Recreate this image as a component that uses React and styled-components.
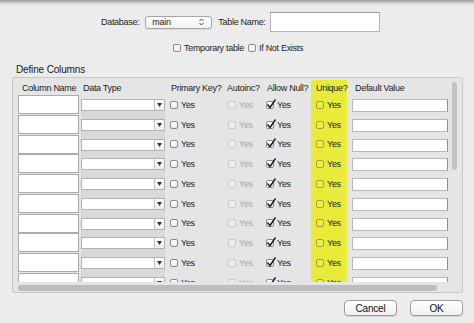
import React from "react";
import styled, { createGlobalStyle } from "styled-components";

const rows = Array.from({ length: 10 }, (_, i) => i);

const GlobalStyle = createGlobalStyle`
  html, body {
    margin: 0;
    padding: 0;
    background: #ececec;
  }
  body {
    font-family: "Liberation Sans", Arial, sans-serif;
    font-size: 9px;
    letter-spacing: -0.3px;
    color: #1c1c1c;
  }
`;

const Check = ({ checked, tone }) => (
  <CheckBox tone={tone}>
    {checked && (
      <svg width="11" height="11" viewBox="0 0 11 11">
        <path d="M1.5 5.5 L4 8.5 L9.5 0.5" fill="none" stroke="#1a1a1a" strokeWidth="1.4" />
      </svg>
    )}
  </CheckBox>
);

const App = () => {
  return (
    <>
      <GlobalStyle />
      <Window>
        <TopRow>
          <Label>Database:</Label>
          <PopUp>
            <span>main</span>
            <svg width="5" height="8" viewBox="0 0 5 8">
              <path d="M0.5 3 L2.5 1 L4.5 3 M0.5 5 L2.5 7 L4.5 5" fill="none" stroke="#333" strokeWidth="0.9" />
            </svg>
          </PopUp>
          <Label>Table Name:</Label>
          <TextField />
        </TopRow>

        <OptionsRow>
          <Option>
            <Check />
            Temporary table
          </Option>
          <Option>
            <Check />
            If Not Exists
          </Option>
        </OptionsRow>

        <Title>Define Columns</Title>

        <Panel>
          <TableClip>
            <Table>
              <Head pad={4}>Column Name</Head>
              <Head pad={3}>Data Type</Head>
              <Head pad={4}>Primary Key?</Head>
              <Head pad={2}>Autoinc?</Head>
              <Head pad={3}>Allow Null?</Head>
              <Head pad={5} highlight>Unique?</Head>
              <Head pad={8}>Default Value</Head>

              {rows.map((r) => (
                <React.Fragment key={r}>
                  <NameCell>
                    <NameField />
                  </NameCell>
                  <TypeCell>
                    <Combo>
                      <ComboArrow>
                        <svg width="5" height="4" viewBox="0 0 5 4">
                          <path d="M0 0 L5 0 L2.5 4 Z" fill="#333" />
                        </svg>
                      </ComboArrow>
                    </Combo>
                  </TypeCell>
                  <CheckCell pad={3}>
                    <Check />
                    <Yes>Yes</Yes>
                  </CheckCell>
                  <CheckCell pad={3}>
                    <Check tone="disabled" />
                    <Yes disabled>Yes</Yes>
                  </CheckCell>
                  <CheckCell pad={2}>
                    <Check checked />
                    <Yes>Yes</Yes>
                  </CheckCell>
                  <CheckCell pad={5} highlight>
                    <Check tone="yellow" />
                    <Yes>Yes</Yes>
                  </CheckCell>
                  <DefaultCell>
                    <DefaultField />
                  </DefaultCell>
                </React.Fragment>
              ))}
            </Table>
          </TableClip>
          <HScroll />
          <VScroll />
        </Panel>

        <Footer>
          <Button>Cancel</Button>
          <Button>OK</Button>
        </Footer>
      </Window>
    </>
  );
};

export default App;

const Window = styled.div`
  width: 474px;
  height: 323px;
  overflow: hidden;
  display: flex;
  flex-direction: column;
  background: linear-gradient(to bottom, #9c9c9c 0px, #cfcfcf 3px, #e6e6e6 5px, #ececec 7px);
`;

const TopRow = styled.div`
  display: flex;
  align-items: center;
  height: 20px;
  margin-top: 12px;
  padding-left: 101px;
`;

const Label = styled.span`
  margin-right: 6px;
  white-space: nowrap;
`;

const PopUp = styled.div`
  box-sizing: border-box;
  width: 67px;
  height: 13px;
  margin-right: 6px;
  padding: 0 7px 0 6px;
  display: flex;
  align-items: center;
  justify-content: space-between;
  border: 1px solid #a6a6a6;
  border-radius: 3px;
  background: linear-gradient(to bottom, #ffffff, #f1f1f1);
  box-shadow: 0 1px 0 rgba(0, 0, 0, 0.08);
`;

const TextField = styled.div`
  box-sizing: border-box;
  width: 110px;
  height: 20px;
  margin-left: -2px;
  border: 1px solid #b5b5b5;
  border-top-color: #9d9d9d;
  background: #fff;
`;

const OptionsRow = styled.div`
  display: flex;
  align-items: center;
  gap: 4px;
  height: 12px;
  margin-top: 10px;
  padding-left: 173px;
`;

const Option = styled.label`
  display: flex;
  align-items: center;
  gap: 3px;
  white-space: nowrap;
`;

const CheckBox = styled.span`
  position: relative;
  box-sizing: border-box;
  width: 8px;
  height: 8px;
  flex: none;
  border-radius: 2px;
  border: 1px solid
    ${(p) => (p.tone === "disabled" ? "#c9c9c9" : p.tone === "yellow" ? "#a8a232" : "#8a8a8a")};
  background: ${(p) =>
    p.tone === "disabled"
      ? "#eeeeee"
      : p.tone === "yellow"
      ? "#eeee4a"
      : "linear-gradient(to bottom, #ffffff, #ececec)"};

  svg {
    position: absolute;
    left: -1px;
    top: -3px;
  }
`;

const Title = styled.div`
  height: 12px;
  line-height: 12px;
  margin-top: 10px;
  padding-left: 16px;
  font-size: 10px;
  letter-spacing: -0.15px;
  color: #1a1a1a;
`;

const Panel = styled.div`
  position: relative;
  box-sizing: border-box;
  width: 451px;
  height: 216px;
  margin: 1px 0 0 12px;
  padding: 2px 0 0 5px;
  border: 1px solid #c7c7c7;
  border-radius: 2px;
  background: #e5e5e5;
`;

const TableClip = styled.div`
  height: 202px;
  overflow: hidden;
`;

const Table = styled.div`
  display: grid;
  grid-template-columns: 62px 87px 58px 39px 47px 36px 101px;
  grid-template-rows: 15px;
  grid-auto-rows: 19.75px;
`;

const Head = styled.div`
  display: flex;
  align-items: center;
  padding-left: ${(p) => p.pad}px;
  white-space: nowrap;
  color: #222;
  background: ${(p) => (p.highlight ? "#e9ea3a" : "transparent")};
`;

const NameCell = styled.div`
  display: flex;
  align-items: flex-start;
`;

const NameField = styled.div`
  box-sizing: border-box;
  width: 61px;
  height: 19px;
  border: 1px solid #ababab;
  background: #fff;
`;

const TypeCell = styled.div`
  padding: 4px 0 0 1px;
`;

const Combo = styled.div`
  box-sizing: border-box;
  position: relative;
  width: 84px;
  height: 12px;
  border: 1px solid #b2b2b2;
  background: #fff;
  box-shadow: 0 8px 0 0 #d9d9d9;
`;

const ComboArrow = styled.div`
  position: absolute;
  right: 0;
  top: 0;
  bottom: 0;
  width: 9px;
  display: flex;
  align-items: center;
  justify-content: center;
  border-left: 1px solid #c4c4c4;
  background: linear-gradient(to bottom, #ffffff, #ededed);
`;

const CheckCell = styled.div`
  display: flex;
  align-items: center;
  gap: 3px;
  padding-left: ${(p) => p.pad}px;
  background: ${(p) => (p.highlight ? "#e9ea3a" : "transparent")};
`;

const Yes = styled.span`
  color: ${(p) => (p.disabled ? "#a9a9a9" : "#1c1c1c")};
`;

const DefaultCell = styled.div`
  padding: 4px 0 0 5px;
`;

const DefaultField = styled.div`
  box-sizing: border-box;
  width: 96px;
  height: 13px;
  border: 1px solid #b8b8b8;
  border-right-color: #8f8f8f;
  background: #fff;
`;

const HScroll = styled.div`
  width: 419px;
  height: 6px;
  margin-top: 3px;
  border-radius: 3px;
  background: #bdbdbd;
`;

const VScroll = styled.div`
  position: absolute;
  right: 5px;
  top: 4px;
  width: 5px;
  height: 88px;
  border-radius: 3px;
  background: #c3c3c3;
`;

const Footer = styled.div`
  display: flex;
  justify-content: flex-end;
  gap: 13px;
  margin-top: 7px;
  padding-right: 11px;
`;

const Button = styled.button`
  box-sizing: border-box;
  width: 53px;
  height: 16px;
  padding: 0;
  border: 1px solid #9d9d9d;
  border-radius: 4px;
  background: linear-gradient(to bottom, #ffffff, #f0f0f0);
  box-shadow: 0 1px 0 rgba(0, 0, 0, 0.1);
  font-family: "Liberation Sans", Arial, sans-serif;
  font-size: 10px;
  letter-spacing: -0.2px;
  color: #111;
`;
